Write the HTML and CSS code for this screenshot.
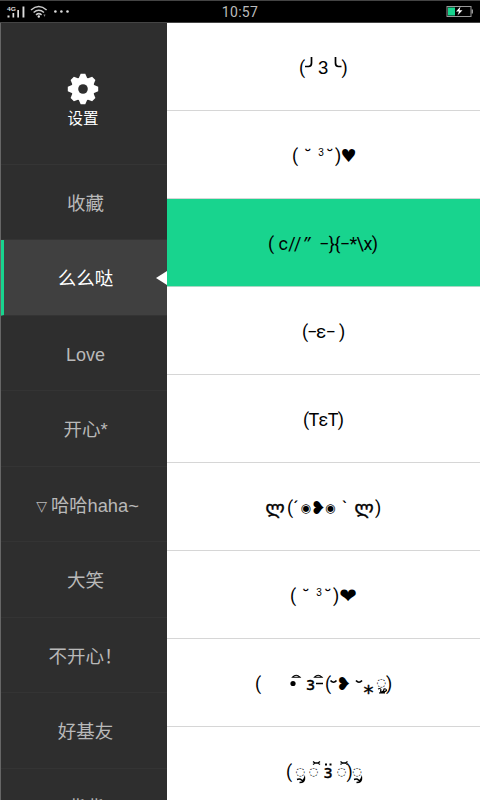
FILE: index.html
```html
<!DOCTYPE html>
<html lang="zh-CN">
<head>
<meta charset="utf-8">
<title>颜文字</title>
<link rel="stylesheet" href="styles.css">
</head>
<body>
<div class="screen">
  <header class="status">
    <svg class="signals" width="80" height="22" viewBox="0 0 80 22">
      <text class="net" x="7" y="10" textLength="9" lengthAdjust="spacingAndGlyphs">4G</text>
      <path d="M7.5 14.500h2v2h-2zM12.5 12h1.700v4.500h-1.700zM17.300 9H19v7.500h-1.700zM22.500 5.500h1.900v11h-1.900z" fill="#ddd"/>
      <g fill="none" stroke="#ccc" stroke-width="1.500"><path d="M31 9q7.800-7 15.600 0M33.600 11.500q5.200-4.500 10.400 0M36 13.800q2.800-2.300 5.600 0"/></g>
      <circle cx="38.800" cy="15.500" r="1.200" fill="#ddd"/><path d="M43.500 13.500h2l-1 2.500z" fill="#888"/>
      <g fill="#ddd"><circle cx="55.400" cy="10.500" r="1.300"/><circle cx="61.400" cy="10.500" r="1.300"/><circle cx="67.500" cy="10.500" r="1.300"/></g>
    </svg>
    <span class="clock">10:57</span>
    <svg class="battery" width="40" height="22" viewBox="0 0 40 22">
      <rect x="7" y="5.500" width="24" height="10" fill="#000" stroke="#999"/>
      <path d="M31.500 8.500h1.500v4h-1.500z" fill="#999"/>
      <path d="M8 6.500h7v8H8z" fill="#18d48e"/>
      <path d="M20.500 5.500l-4.500 5h3l-1.500 4 5-5.300h-3z" fill="#fff"/>
    </svg>
  </header>
  <div class="body">
    <nav class="side">
      <div class="settings">
        <svg width="32" height="32" viewBox="-16 -16 32 32" fill="#fff">
          <path id="tooth" d="M-4.600-10L-2.300-15.200H2.300L4.600-10V10L2.300 15.200H-2.300L-4.600 10z"/>
          <use href="#tooth" transform="rotate(45)"/><use href="#tooth" transform="rotate(90)"/><use href="#tooth" transform="rotate(135)"/>
          <circle r="11.500"/><circle r="4.800" fill="#2e2e2e"/>
        </svg>
        <span>设置</span>
      </div>
      <div class="item">收藏</div>
      <div class="item active">么么哒<i class="arrow"></i></div>
      <div class="item love">Love</div>
      <div class="item">开心*</div>
      <div class="item haha"><span class="tri">▽</span>哈哈haha~</div>
      <div class="item">大笑</div>
      <div class="item">不开心！</div>
      <div class="item">好基友</div>
      <div class="item">背背</div>
    </nav>
    <main class="faces">
      <div class="row"><svg viewBox="167 0 313 88"><text y="51"><tspan x="299">(</tspan><tspan x="318" class="wide">3</tspan><tspan x="341.500">)</tspan></text><path class="corner" d="M311.500 34v6q0 3.500-3 3.500h-3.500M335.500 34v6q0 3.500 3 3.500h3"/></svg></div>
      <div class="row"><svg viewBox="167 0 313 88"><text y="51"><tspan x="292">(</tspan><tspan x="304">˘</tspan><tspan x="326">˘</tspan><tspan x="335">)</tspan></text><text class="small" x="318.300" y="45">3</text><text class="sym" x="340.500" y="51">♥</text></svg></div>
      <div class="row selected"><svg viewBox="167 0 313 88"><text y="51"><tspan x="268">(</tspan><tspan x="278.500" textLength="23">c//</tspan><tspan x="319" textLength="59" lengthAdjust="spacing">−}{−*\x)</tspan></text><text class="quote" x="303" y="51">”</text></svg></div>
      <div class="row"><svg viewBox="167 0 313 88"><text y="51"><tspan x="302">(</tspan><tspan x="307">−</tspan><tspan class="eps" x="316">ε</tspan><tspan x="325.500">−</tspan><tspan x="339">)</tspan></text></svg></div>
      <div class="row"><svg viewBox="167 0 313 88"><text x="303" y="51" textLength="41">(TεT)</text></svg></div>
      <div class="row"><svg viewBox="167 0 313 88"><text class="sym lasi" y="51"><tspan x="265.500">ლ</tspan><tspan x="354.500">ლ</tspan></text><text class="sym" x="310.500" y="51">❥</text><text y="51"><tspan x="287">(</tspan><tspan x="293">´</tspan><tspan x="342">`</tspan><tspan x="375">)</tspan></text><text class="eye" y="48.500"><tspan x="300.500">◉</tspan><tspan x="325">◉</tspan></text></svg></div>
      <div class="row"><svg viewBox="167 0 313 88"><text y="51"><tspan x="290">(</tspan><tspan x="302">˘</tspan><tspan x="324">˘</tspan><tspan x="333">)</tspan></text><text class="small" x="316.300" y="45">3</text><text class="heart" x="339.300" y="51.500">❤</text></svg></div>
      <div class="row"><svg viewBox="167 0 313 88"><text y="51"><tspan x="255">(</tspan><tspan x="325">(</tspan><tspan x="386">)</tspan></text><text class="bold" x="306" y="51">з</text><text class="star" x="363.500" y="60">*</text><text class="sym" x="336" y="51">❥</text><text class="ring" x="376.700" y="46.500">◌</text><circle cx="293" cy="44.500" r="2.600"/><g class="mark"><path d="M292.500 38.200q3.500-4 7.500 0zM314.500 38.200q3.500-4 7.500 0z"/><path d="M316 44.500h7" stroke-width="1.500"/><path d="M330.500 41.500q3 3.500 6 0M356 41.500q3 3.500 6 0" stroke-width="1.700"/><path d="M378 50q3-1.200 3 1-1 1 0 2 3-.2 3-3 2.500-.5 2.500 1.500-2 2-7.500 2.500h6"/></g></svg></div>
      <div class="row"><svg viewBox="167 0 313 88"><text y="51"><tspan x="286">(</tspan><tspan x="346.500">)</tspan></text><text class="bold" x="323.500" y="51">з</text><text class="ring" y="47.500"><tspan x="295.800">◌</tspan><tspan x="309">◌</tspan><tspan x="336.900">◌</tspan><tspan x="352.400">◌</tspan></text><g class="mark"><path d="M297 52.500q3-1 4.500.5t3-2q.5 4.500-5 4.500M354 52.500q3-1 4.500.5t3-2q.5 4.500-5 4.500" stroke-width="1.500"/><path d="M313 34.500l2 1.500h3l2-1.500M313 37.500l2-1.500h3l2 1.500M340.500 34.500l2 1.500h3l2-1.500M340.500 37.500l2-1.500h3l2 1.500" stroke-width="1.300"/><path d="M325 37.500h2M329.500 37.500h2" stroke-width="2"/></g></svg></div>
    </main>
  </div>
</div>
</body>
</html>
```
FILE: styles.css
```css
* { box-sizing: border-box; }
body { margin: 0; font-family: "Roboto", "Noto Sans CJK SC", "DejaVu Sans", sans-serif; }
.screen { width: 480px; height: 800px; overflow: hidden; display: flex; flex-direction: column; background: #fff; }
.status { height: 23px; flex: none; display: grid; grid-template-columns: 1fr auto 1fr; align-items: center; background: #000; border-top: 1px solid #444; border-bottom: 1px solid #444; }
.battery { justify-self: end; }
.net { font: bold 6px "Liberation Sans", sans-serif; fill: #ddd; }
.clock { color: #bbb; font: 14px/21px "Roboto", sans-serif; letter-spacing: .3px; padding-top: 1px; }
.body { flex: 1; min-height: 0; display: flex; }
.side { width: 167px; flex: none; overflow: hidden; background: #2e2e2e; border-left: 1px solid #666; color: #b9b9b9; font-family: "Liberation Sans", "Noto Sans CJK SC", sans-serif; }
.settings { height: 141.5px; padding-top: 49.5px; padding-right: 2px; border-bottom: 1px solid #353535; display: flex; flex-direction: column; align-items: center; color: #fff; font-size: 15.5px; line-height: 24px; }
.settings span { margin-top: 2px; }
.item { position: relative; height: 75.5px; display: flex; align-items: center; justify-content: center; padding-left: 3px; padding-top: 4px; border-bottom: 1px solid #343434; font-size: 18.5px; line-height: 28px; white-space: nowrap; }
.love { font-size: 18px; padding-top: 5px; }
.haha { padding-left: 7px; font-size: 18.3px; }
.active { background: #404040; color: #fff; margin-left: -1px; border-left: 4px solid #18d48e; padding-left: 0; }
.arrow { position: absolute; right: 0; top: 31px; border: 7px solid transparent; border-right: 11px solid #fff; border-left: 0; }
.tri { font: 14px "DejaVu Sans", sans-serif; margin-right: 4px; }
.faces { flex: 1; min-width: 0; overflow: hidden; }
.row { height: 88px; border-bottom: 1px solid #d6d6d6; background: #fff; }
.row svg { display: block; width: 313px; height: 88px; fill: #000; }
.selected { background: #18d48e; border-bottom-color: #a8d8c4; }
.row text { font: 18px "Roboto", "Noto Sans CJK SC", "DejaVu Sans", sans-serif; }
.row .wide { font: 18.5px "Liberation Sans", sans-serif; }
.row .quote { font: italic 18px "Noto Sans", sans-serif; }
.row .eps { font-size: 19px; }
.corner { fill: none; stroke: #000; stroke-width: 1.7; }
.row .small { font: 10px "Liberation Sans", sans-serif; }
.row .sym { font: 18px "DejaVu Sans", sans-serif; }
.row .lasi { stroke: #000; stroke-width: .4; }
.row .eye { font: 12px "DejaVu Sans", sans-serif; }
.row .heart { font: 21px "DejaVu Sans", sans-serif; }
.row .bold { font: 17px "DejaVu Sans", sans-serif; stroke: #000; stroke-width: .4; }
.row .star { font: 20px "DejaVu Sans", sans-serif; stroke: #000; stroke-width: .4; }
.row .ring { font: 11px "DejaVu Sans", sans-serif; }
.mark { fill: none; stroke: #000; stroke-width: 1.1; }
```
